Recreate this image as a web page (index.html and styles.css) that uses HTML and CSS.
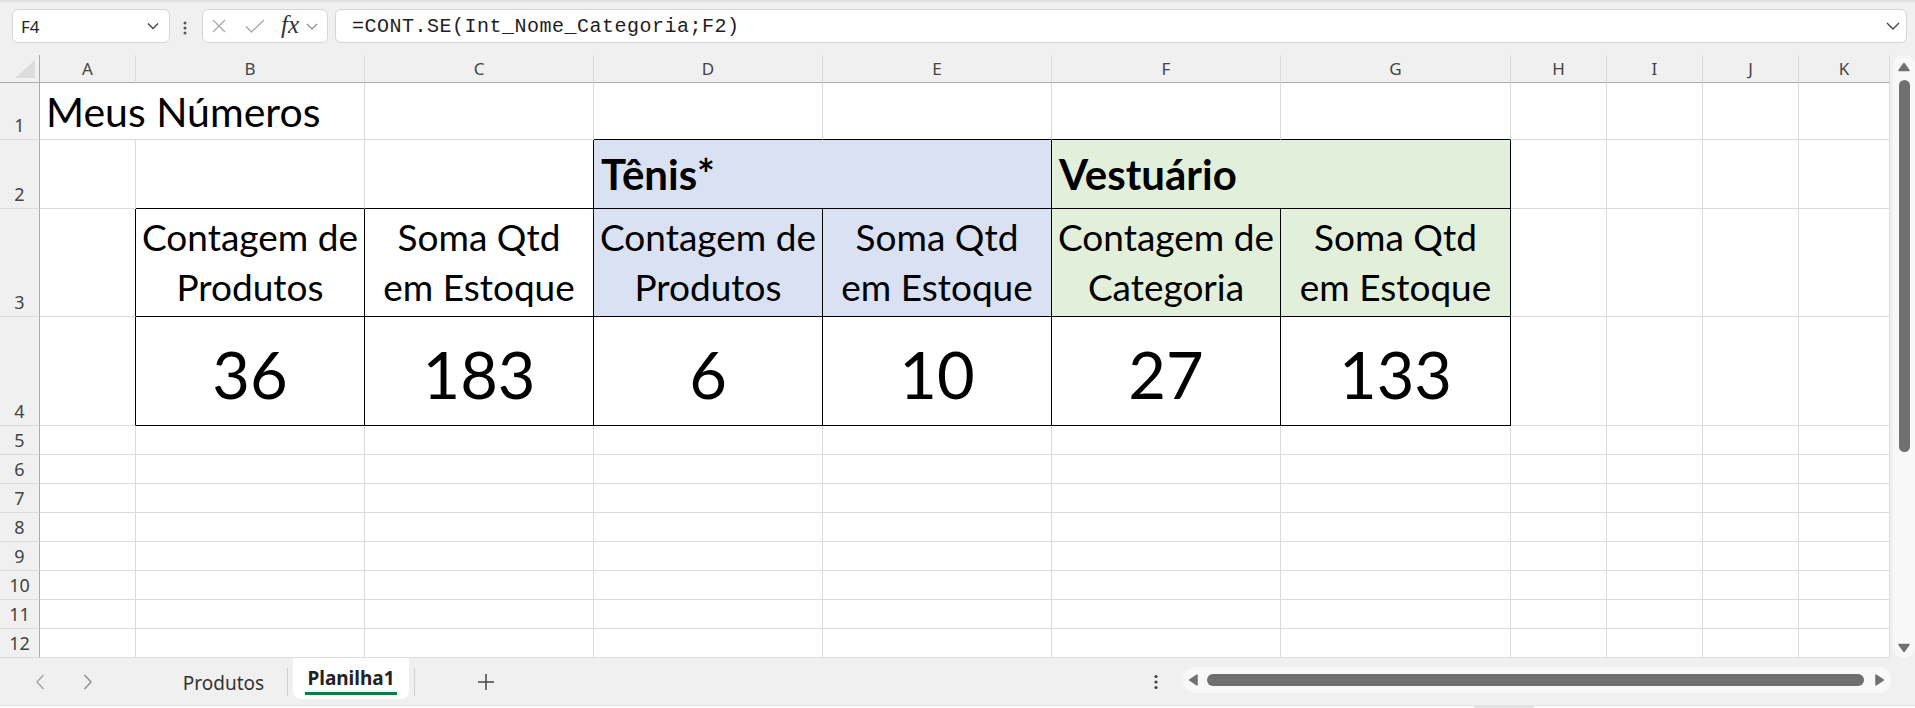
FILE: index.html
```html
<!DOCTYPE html>
<html lang="pt-BR">
<head>
    <meta charset="UTF-8">
    <meta name="viewport" content="width=device-width, initial-scale=1.0">
    <title>Planilha1 - Meus Números</title>
    <link rel="stylesheet" href="styles.css">
</head>
<body>
    <div class="formula-bar">
        <div class="name-box">
            <span>F4</span>
            <svg width="12" height="8" viewBox="0 0 12 8"><path d="M1 1.5l5 5 5-5" fill="none" stroke="#444" stroke-width="1.3"/></svg>
        </div>
        <svg class="bar-dots" width="4" height="16" viewBox="0 0 4 16"><circle cx="2" cy="3" r="1.5"/><circle cx="2" cy="8" r="1.5"/><circle cx="2" cy="13" r="1.5"/></svg>
        <div class="fx-box">
            <svg class="ico-x" width="14" height="14" viewBox="0 0 14 14"><path d="M1 1l12 12M13 1L1 13" stroke="#a8a8a8" stroke-width="1.3"/></svg>
            <svg class="ico-ok" width="20" height="14" viewBox="0 0 20 14"><path d="M1 7.5l5.5 5.5L19 1" fill="none" stroke="#a8a8a8" stroke-width="1.3"/></svg>
            <span class="fx">fx</span>
            <svg class="ico-down" width="12" height="7" viewBox="0 0 12 7"><path d="M1 1l5 5 5-5" fill="none" stroke="#8a8a8a" stroke-width="1.2"/></svg>
        </div>
        <div class="formula">
            <span>=CONT.SE(Int_Nome_Categoria;F2)</span>
            <svg width="14" height="8" viewBox="0 0 14 8"><path d="M1 1l6 6 6-6" fill="none" stroke="#444" stroke-width="1.4"/></svg>
        </div>
    </div>

    <div class="sheet">
        <div class="grid">
            <!-- column headers -->
            <div class="corner"><svg width="39" height="27" viewBox="0 0 39 27"><polygon points="15,23 35,5 35,23" fill="#dcdcdc"/></svg></div>
            <div class="ch">A</div><div class="ch">B</div><div class="ch">C</div><div class="ch">D</div>
            <div class="ch">E</div><div class="ch">F</div><div class="ch">G</div><div class="ch">H</div>
            <div class="ch">I</div><div class="ch">J</div><div class="ch">K</div>

            <!-- row 1 -->
            <div class="rh">1</div>
            <div class="title">Meus Números</div>
            <div></div><div class="bb"></div><div class="bb"></div><div class="bb"></div><div class="bb"></div>
            <div></div><div></div><div></div><div></div>

            <!-- row 2 -->
            <div class="rh">2</div>
            <div></div><div class="bb"></div><div class="bb br"></div>
            <div class="cat blue">Tênis*</div>
            <div class="cat green">Vestuário</div>
            <div></div><div></div><div></div><div></div>

            <!-- row 3 -->
            <div class="rh">3</div>
            <div class="br"></div>
            <div class="lbl">Contagem de<br>Produtos</div>
            <div class="lbl">Soma Qtd<br>em Estoque</div>
            <div class="lbl blue">Contagem de<br>Produtos</div>
            <div class="lbl blue">Soma Qtd<br>em Estoque</div>
            <div class="lbl green">Contagem de<br>Categoria</div>
            <div class="lbl green">Soma Qtd<br>em Estoque</div>
            <div></div><div></div><div></div><div></div>

            <!-- row 4 -->
            <div class="rh">4</div>
            <div class="br"></div>
            <div class="num">36</div>
            <div class="num">183</div>
            <div class="num">6</div>
            <div class="num">10</div>
            <div class="num">27</div>
            <div class="num">133</div>
            <div></div><div></div><div></div><div></div>

            <!-- rows 5-12 -->
            <div class="rh">5</div><div></div><div></div><div></div><div></div><div></div><div></div><div></div><div></div><div></div><div></div><div></div>
            <div class="rh">6</div><div></div><div></div><div></div><div></div><div></div><div></div><div></div><div></div><div></div><div></div><div></div>
            <div class="rh">7</div><div></div><div></div><div></div><div></div><div></div><div></div><div></div><div></div><div></div><div></div><div></div>
            <div class="rh">8</div><div></div><div></div><div></div><div></div><div></div><div></div><div></div><div></div><div></div><div></div><div></div>
            <div class="rh">9</div><div></div><div></div><div></div><div></div><div></div><div></div><div></div><div></div><div></div><div></div><div></div>
            <div class="rh">10</div><div></div><div></div><div></div><div></div><div></div><div></div><div></div><div></div><div></div><div></div><div></div>
            <div class="rh">11</div><div></div><div></div><div></div><div></div><div></div><div></div><div></div><div></div><div></div><div></div><div></div>
            <div class="rh">12</div><div></div><div></div><div></div><div></div><div></div><div></div><div></div><div></div><div></div><div></div><div></div>
        </div>

        <div class="vscroll">
            <div class="vtrack">
                <svg width="12" height="10" viewBox="0 0 12 10"><polygon points="6,1.5 11,8.5 1,8.5" fill="#707070" stroke="#707070" stroke-linejoin="round" stroke-width="1.5"/></svg>
                <div class="vthumb"></div>
                <svg class="vdown" width="12" height="10" viewBox="0 0 12 10"><polygon points="1,1.5 11,1.5 6,8.5" fill="#707070" stroke="#707070" stroke-linejoin="round" stroke-width="1.5"/></svg>
            </div>
        </div>
    </div>

    <div class="tabbar">
        <div class="tab-nav">
            <svg width="10" height="16" viewBox="0 0 10 16"><path d="M8.5 1L2 8l6.5 7" fill="none" stroke="#a3a3a3" stroke-width="1.4"/></svg>
            <svg width="10" height="16" viewBox="0 0 10 16"><path d="M1.5 1L8 8l-6.5 7" fill="none" stroke="#8c8c8c" stroke-width="1.4"/></svg>
        </div>
        <div class="sheet-tab">Produtos</div>
        <span class="tab-sep"></span>
        <div class="sheet-tab active"><span>Planilha1</span></div>
        <span class="tab-sep"></span>
        <svg class="add" width="16" height="16" viewBox="0 0 16 16"><path d="M8 0v16M0 8h16" stroke="#444" stroke-width="1.5"/></svg>
        <svg class="tab-more" width="4" height="16" viewBox="0 0 4 16"><circle cx="2" cy="2.5" r="1.6"/><circle cx="2" cy="8" r="1.6"/><circle cx="2" cy="13.5" r="1.6"/></svg>
        <div class="hscroll">
            <svg width="11" height="12" viewBox="0 0 11 12"><polygon points="1.5,6 9,1 9,11" fill="#707070" stroke="#707070" stroke-linejoin="round" stroke-width="1.5"/></svg>
            <div class="hthumb"></div>
            <svg width="11" height="12" viewBox="0 0 11 12"><polygon points="9.5,6 2,1 2,11" fill="#707070" stroke="#707070" stroke-linejoin="round" stroke-width="1.5"/></svg>
        </div>
    </div>
    <div class="status"><div class="grip"></div></div>
</body>
</html>
```

FILE: styles.css
```css
* {
    box-sizing: border-box;
}

body {
    margin: 0;
    width: 1915px;
    height: 708px;
    overflow: hidden;
    background: #f0f0f0;
    font-family: "Noto Sans", "Open Sans", sans-serif;
    color: #333;
}

/* formula bar */

.formula-bar {
    height: 55px;
    display: flex;
    padding: 9px 8px 0 12px;
    box-shadow: inset 0 4px 3px -3px rgba(0,0,0,0.12);
}

.name-box,
.fx-box,
.formula {
    height: 34px;
    background: #fff;
    border: 1px solid #d6d6d6;
    border-radius: 6px;
    display: flex;
    align-items: center;
}

.name-box {
    width: 158px;
    justify-content: space-between;
    padding: 0 10px 0 8px;
    font-size: 17px;
    color: #222;
}

.bar-dots {
    fill: #555;
    margin: 0 15px 0 13px;
    align-self: center;
    position: relative;
    top: -4px;
}

.fx-box {
    width: 126px;
    padding-left: 9px;
}

.ico-ok {
    margin-left: 19px;
}

.fx {
    margin-left: 16px;
    font-family: "Liberation Serif", serif;
    font-style: italic;
    font-size: 25px;
    color: #333;
    line-height: 1;
    position: relative;
    top: -2px;
}

.ico-down {
    margin-left: 7px;
}

.formula {
    flex: 1;
    margin-left: 7px;
    padding: 0 6px 0 16px;
    justify-content: space-between;
    font-family: "Liberation Mono", monospace;
    font-size: 20px;
    letter-spacing: 0.5px;
    color: #1e1e1e;
}

/* grid */

.sheet {
    display: flex;
    height: 603px;
}

.grid {
    width: 1890px;
    display: grid;
    grid-template-columns: 40px 96px repeat(5, 229px) 230px repeat(3, 96px) 91px;
    grid-template-rows: 28px 57px 69px 108px 109px repeat(8, 29px);
    background: #fff;
}

.grid > div {
    border-right: 1px solid #dcdcdc;
    border-bottom: 1px solid #dcdcdc;
}

.grid .corner {
    background: #f0f0f0;
    border-right-color: #ababab;
    border-bottom-color: #ababab;
}

.corner svg {
    display: block;
}

.grid .ch {
    background: #f0f0f0;
    border-bottom-color: #ababab;
    display: flex;
    align-items: center;
    justify-content: center;
    font-size: 17px;
    color: #444;
}

.grid .rh {
    background: #f0f0f0;
    border-right-color: #ababab;
    display: flex;
    align-items: flex-end;
    justify-content: center;
    font-size: 18px;
    line-height: 1.2;
    padding-bottom: 2px;
    color: #444;
}

.title {
    grid-column: span 2;
    display: flex;
    align-items: flex-end;
    padding: 0 0 3px 6px;
    font-family: Lato, sans-serif;
    font-size: 41px;
    line-height: 1.2;
    color: #000;
    white-space: nowrap;
}

.grid .bb {
    border-bottom-color: #000;
}

.grid .br {
    border-right-color: #000;
}

.grid .cat,
.grid .lbl,
.grid .num {
    border-right-color: #000;
    border-bottom-color: #000;
    font-family: Lato, sans-serif;
    color: #000;
    display: flex;
    align-items: flex-end;
}

.cat {
    grid-column: span 2;
    padding: 0 0 9px 7px;
    font-size: 42px;
    font-weight: bold;
    line-height: 1.2;
}

.lbl {
    justify-content: center;
    text-align: center;
    padding-bottom: 4px;
    font-size: 37px;
    line-height: 50px;
}

.num {
    justify-content: center;
    padding-bottom: 12px;
    font-size: 65px;
    line-height: 1.2;
}

.blue {
    background: #d9e1f2;
}

.green {
    background: #e2efda;
}

/* vertical scrollbar */

.vscroll {
    width: 25px;
    padding-left: 3px;
}

.vtrack {
    height: 100%;
    background: #f8f8f8;
    border-radius: 11px;
    display: flex;
    flex-direction: column;
    align-items: center;
    padding: 7px 0 5px;
}

.vthumb {
    width: 11px;
    height: 372px;
    margin-top: 8px;
    border-radius: 6px;
    background: #707070;
}

.vdown {
    margin-top: auto;
}

/* sheet tabs */

.tabbar {
    height: 47px;
    display: flex;
    align-items: center;
}

.tab-nav {
    width: 160px;
    display: flex;
    gap: 38px;
    padding-left: 35px;
}

.sheet-tab {
    align-self: stretch;
    width: 127px;
    text-align: center;
    padding-top: 14px;
    font-size: 19px;
    line-height: 22px;
    color: #333;
}

.sheet-tab.active {
    align-self: flex-start;
    width: 116px;
    height: 41px;
    margin: 0 5px;
    padding-top: 9px;
    background: #fff;
    border-radius: 0 0 8px 8px;
    font-weight: bold;
    color: #222;
}

.active span {
    display: inline-block;
    padding: 0 2px 3px;
    border-bottom: 3px solid #107c41;
}

.tab-sep {
    width: 1px;
    height: 28px;
    background: #cfcfcf;
}

.add {
    margin-left: 63px;
}

.tab-more {
    fill: #444;
    margin: 0 25px 0 auto;
}

.hscroll {
    align-self: flex-start;
    margin: 9px 24px 0 0;
    width: 708px;
    height: 26px;
    background: #f8f8f8;
    border-radius: 13px;
    display: flex;
    align-items: center;
    padding: 0 6px 0 5px;
}

.hthumb {
    flex: 1;
    height: 12px;
    margin: 0 10px 0 8px;
    border-radius: 6px;
    background: #6e6e6e;
}

.status {
    height: 3px;
    background: #fafafa;
    border-top: 1px solid #e3e3e3;
}

.grip {
    width: 60px;
    height: 2px;
    margin-left: 1474px;
    background: #e2e2e2;
}
```
